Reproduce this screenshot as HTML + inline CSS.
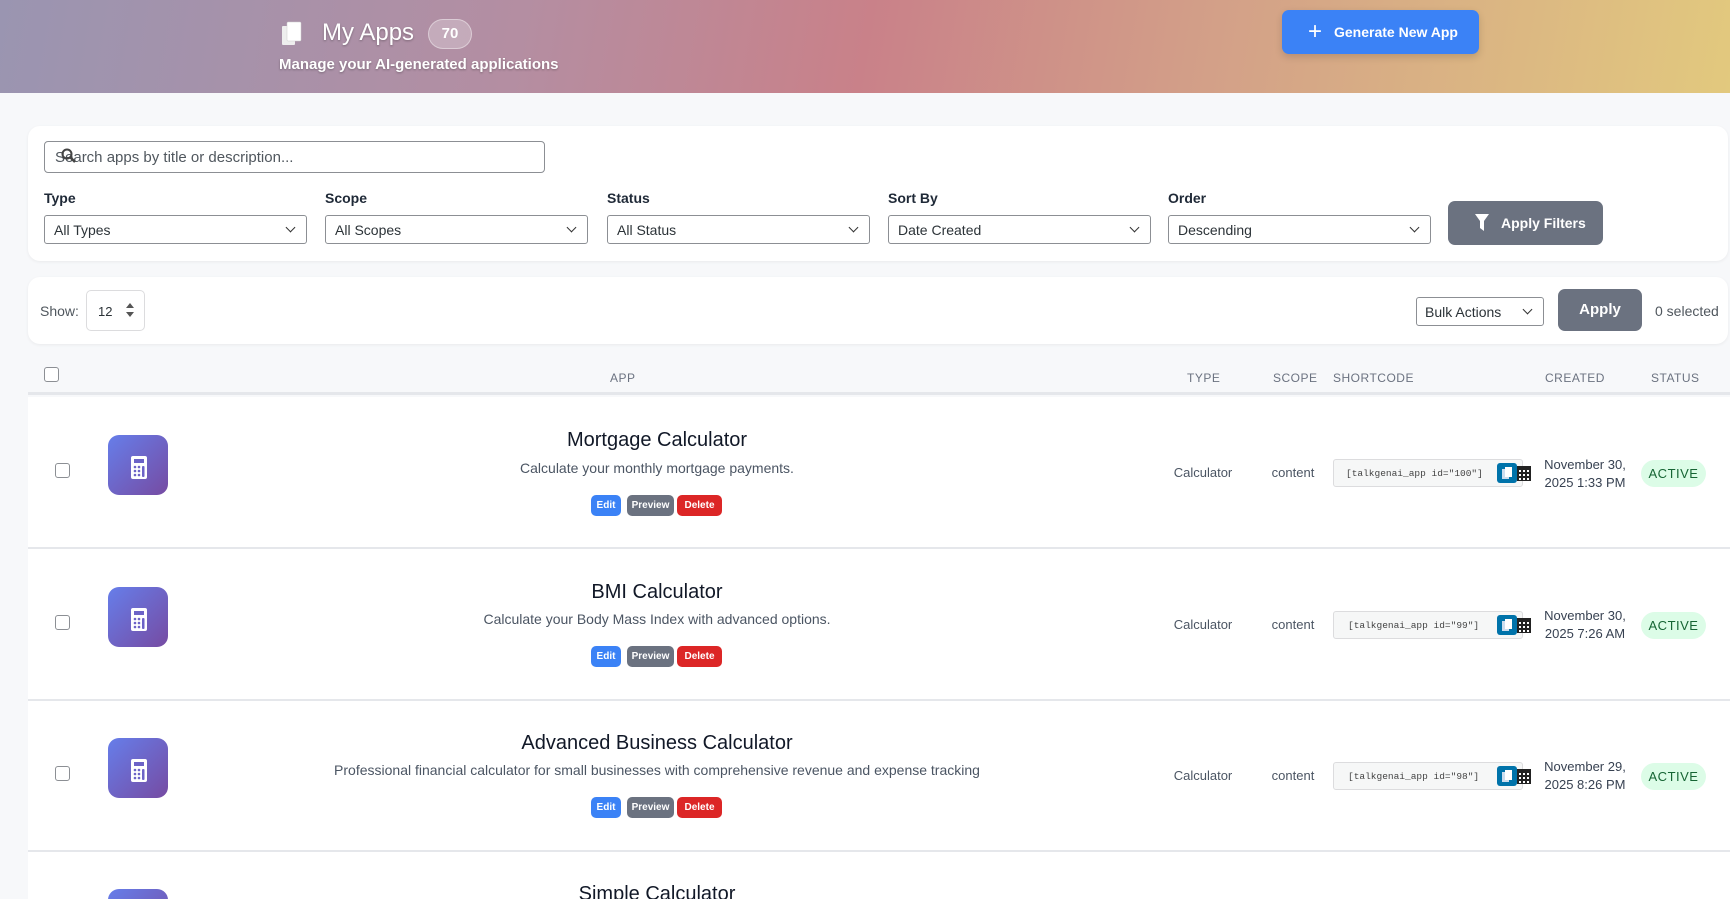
<!DOCTYPE html>
<html><head><meta charset="utf-8"><style>
*{box-sizing:border-box;margin:0;padding:0}
html,body{width:1730px;height:899px;overflow:hidden}
body{background:#f7f8fa;font-family:"Liberation Sans",sans-serif;color:#1f2937;position:relative}
.a{position:absolute}
.hdr{left:0;top:0;width:1730px;height:93px;background:linear-gradient(100deg,#9a95b1 0%,#b48ea2 30%,#c98189 50%,#d3a088 70%,#e2c97e 100%)}
.card{background:#fff;border-radius:12px;box-shadow:0 1px 3px rgba(0,0,0,.06)}
.lbl{font-size:14px;font-weight:bold;color:#1f2937}
.sel{height:29px;border:1px solid #8c8f94;border-radius:3px;background:#fff;font-size:14px;color:#2c3338;padding:6px 9px;width:263px}
.sel:after{content:"";position:absolute;right:12px;top:8px;width:6px;height:6px;border-right:1.5px solid #333;border-bottom:1.5px solid #333;transform:rotate(45deg)}
.th{font-size:12px;color:#6b7280;letter-spacing:.5px;top:371px}
.sep{left:28px;width:1702px;height:2px;background:#e5e7eb}
.cb{width:15px;height:15px;border:1.5px solid #8c8f94;border-radius:3px;background:#fff}
.ic{width:60px;height:60px;border-radius:11px;background:linear-gradient(135deg,#667eea,#764ba2)}
.t{font-size:20px;color:#111827;text-align:center;width:700px;left:307px;height:22px;overflow:hidden}
.d{font-size:14px;color:#4b5563;text-align:center;width:900px;left:207px}
.b{height:21px;border-radius:5px;color:#fff;font-size:10px;font-weight:bold;text-align:center;line-height:21px}
.c{font-size:13px;color:#4b5563;text-align:center}
.sc{width:190px;height:28px;background:#f6f7f7;border:1px solid #dcdcde;border-radius:3px;font-family:"Liberation Mono",monospace;font-size:9.5px;color:#444;padding:8px 0 0 12px}
.cp{width:20px;height:20px;background:#0073aa;border-radius:3px}
.dt{font-size:13px;color:#374151;text-align:center;width:100px;line-height:18px}
.ac{width:65px;height:27px;border-radius:14px;background:#dcfce7;color:#166534;font-size:13px;text-align:center;line-height:27px;letter-spacing:.5px}
</style></head><body>
<div class="a hdr"></div>
<svg class="a" style="left:281px;top:21px" width="22" height="26" viewBox="0 0 22 26"><rect x="1" y="5" width="13" height="19" fill="#eee" rx="1"/><rect x="6" y="1" width="14" height="19" fill="#fff" rx="1" stroke="#ccc" stroke-width=".5"/></svg>
<div class="a" style="left:322px;top:19px;font-size:24px;color:#fff;text-shadow:0 1px 2px rgba(0,0,0,.3)">My Apps</div>
<div class="a" style="left:428px;top:19px;width:44px;height:30px;border-radius:15px;background:rgba(255,255,255,.25);border:1px solid rgba(255,255,255,.4);color:#fff;font-weight:bold;font-size:15px;text-align:center;line-height:28px">70</div>
<div class="a" style="left:279px;top:56px;font-size:15px;font-weight:bold;color:#fff;text-shadow:0 1px 2px rgba(0,0,0,.3)">Manage your AI-generated applications</div>
<div class="a" style="left:1282px;top:10px;width:197px;height:44px;background:#3b82f6;border-radius:7px;box-shadow:0 3px 8px rgba(0,0,0,.15);color:#fff;font-weight:bold;font-size:14px;line-height:44px;padding-left:52px">Generate New App</div>
<div class="a" style="left:1308px;top:23px;font-size:24px;color:#fff;line-height:18px">+</div>

<div class="a card" style="left:28px;top:126px;width:1700px;height:135px"></div>
<div class="a" style="left:44px;top:141px;width:501px;height:32px;border:1px solid #8c8f94;border-radius:4px;background:#fff;font-size:15px;color:#50575e;padding:7px 10px">Search apps by title or description...</div>
<svg class="a" style="left:61px;top:148px" width="16" height="16"><circle cx="6" cy="6" r="4.5" fill="none" stroke="#444" stroke-width="2"/><path d="M9 9l5 5" stroke="#444" stroke-width="2.5"/></svg>
<div class="a lbl" style="left:44px;top:190px">Type</div>
<div class="a lbl" style="left:325px;top:190px">Scope</div>
<div class="a lbl" style="left:607px;top:190px">Status</div>
<div class="a lbl" style="left:888px;top:190px">Sort By</div>
<div class="a lbl" style="left:1168px;top:190px">Order</div>
<div class="a sel" style="left:44px;top:215px">All Types</div>
<div class="a sel" style="left:325px;top:215px">All Scopes</div>
<div class="a sel" style="left:607px;top:215px">All Status</div>
<div class="a sel" style="left:888px;top:215px">Date Created</div>
<div class="a sel" style="left:1168px;top:215px">Descending</div>
<div class="a" style="left:1448px;top:201px;width:155px;height:44px;background:#6b7280;border-radius:7px;color:#fff;font-weight:bold;font-size:14px;line-height:44px;padding-left:53px">Apply Filters</div>
<svg class="a" style="left:1475px;top:214px" width="14" height="17"><path d="M0 0h14L9 7v10L5 14V7z" fill="#fff"/></svg>

<div class="a card" style="left:28px;top:277px;width:1700px;height:67px"></div>
<div class="a" style="left:40px;top:303px;font-size:14px;color:#50575e">Show:</div>
<div class="a" style="left:86px;top:290px;width:59px;height:41px;border:1px solid #dcdcde;border-radius:5px;background:#fff;font-size:13px;color:#2c3338;padding:13px 0 0 11px">12</div>
<svg class="a" style="left:126px;top:303px" width="8" height="14"><path d="M4 0L8 5H0zM4 14L0 9h8z" fill="#555"/></svg>
<div class="a sel" style="left:1416px;top:297px;width:128px;padding-left:8px">Bulk Actions</div>
<div class="a" style="left:1558px;top:289px;width:84px;height:42px;background:#6b7280;border-radius:7px;color:#fff;font-weight:bold;font-size:15px;line-height:42px;text-align:center">Apply</div>
<div class="a" style="left:1655px;top:303px;font-size:14px;color:#50575e">0 selected</div>

<div class="a" style="left:28px;top:359px;width:1702px;height:36px;background:#f7f8fa;border-bottom:3px solid #e5e7eb"></div>
<div class="a cb" style="left:44px;top:367px"></div>
<div class="a th" style="left:610px">APP</div>
<div class="a th" style="left:1187px">TYPE</div>
<div class="a th" style="left:1273px">SCOPE</div>
<div class="a th" style="left:1333px">SHORTCODE</div>
<div class="a th" style="left:1545px">CREATED</div>
<div class="a th" style="left:1651px">STATUS</div>

<div class="a" style="left:28px;top:397px;width:1702px;height:502px;background:#fff"></div>
<div class="a sep" style="top:547px"></div>
<div class="a sep" style="top:699px"></div>
<div class="a sep" style="top:850px"></div>

<div class="a cb" style="left:55px;top:463px"></div>
<div class="a ic" style="left:108px;top:435px"></div>
<svg class="a" style="left:131px;top:456px" width="16" height="23"><rect width="16" height="23" rx="2" fill="#fff"/><rect x="3" y="3" width="10" height="4" fill="#6c63c7"/><g fill="#6c63c7"><circle cx="4" cy="11" r="1.3"/><circle cx="8" cy="11" r="1.3"/><circle cx="4" cy="15" r="1.3"/><circle cx="8" cy="15" r="1.3"/><circle cx="4" cy="19" r="1.3"/><circle cx="8" cy="19" r="1.3"/><rect x="11" y="10" width="2.5" height="11" rx="1"/></g></svg>
<div class="a t" style="top:429px">Mortgage Calculator</div>
<div class="a d" style="top:460px">Calculate your monthly mortgage payments.</div>
<div class="a b" style="left:591px;top:495px;width:30px;background:#3b82f6">Edit</div>
<div class="a b" style="left:627px;top:495px;width:47px;background:#6b7280">Preview</div>
<div class="a b" style="left:677px;top:495px;width:45px;background:#dc2626">Delete</div>
<div class="a c" style="left:1163px;top:465px;width:80px">Calculator</div>
<div class="a c" style="left:1263px;top:465px;width:60px">content</div>
<div class="a sc" style="left:1333px;top:459px">[talkgenai_app id="100"]</div>
<div class="a cp" style="left:1497px;top:463px"></div>
<svg class="a" style="left:1517px;top:463px" width="14" height="18"><rect x="0" y="3" width="14" height="15" fill="#222"/><g fill="#fff"><rect x="2" y="7" width="2" height="2"/><rect x="6" y="7" width="2" height="2"/><rect x="10" y="7" width="2" height="2"/><rect x="2" y="11" width="2" height="2"/><rect x="6" y="11" width="2" height="2"/><rect x="10" y="11" width="2" height="2"/><rect x="2" y="15" width="2" height="2"/><rect x="6" y="15" width="2" height="2"/><rect x="10" y="15" width="2" height="2"/></g></svg>
<svg class="a" style="left:1502px;top:467px" width="11" height="13"><rect x="0" y="2" width="7" height="10" fill="#cde"/><rect x="3" y="0" width="7" height="10" fill="#fff"/></svg>
<div class="a dt" style="left:1535px;top:456px">November 30,<br>2025 1:33 PM</div>
<div class="a ac" style="left:1641px;top:460px">ACTIVE</div>

<div class="a cb" style="left:55px;top:615px"></div>
<div class="a ic" style="left:108px;top:587px"></div>
<svg class="a" style="left:131px;top:608px" width="16" height="23"><rect width="16" height="23" rx="2" fill="#fff"/><rect x="3" y="3" width="10" height="4" fill="#6c63c7"/><g fill="#6c63c7"><circle cx="4" cy="11" r="1.3"/><circle cx="8" cy="11" r="1.3"/><circle cx="4" cy="15" r="1.3"/><circle cx="8" cy="15" r="1.3"/><circle cx="4" cy="19" r="1.3"/><circle cx="8" cy="19" r="1.3"/><rect x="11" y="10" width="2.5" height="11" rx="1"/></g></svg>
<div class="a t" style="top:581px">BMI Calculator</div>
<div class="a d" style="top:611px">Calculate your Body Mass Index with advanced options.</div>
<div class="a b" style="left:591px;top:646px;width:30px;background:#3b82f6">Edit</div>
<div class="a b" style="left:627px;top:646px;width:47px;background:#6b7280">Preview</div>
<div class="a b" style="left:677px;top:646px;width:45px;background:#dc2626">Delete</div>
<div class="a c" style="left:1163px;top:617px;width:80px">Calculator</div>
<div class="a c" style="left:1263px;top:617px;width:60px">content</div>
<div class="a sc" style="left:1333px;top:611px;padding-left:14px">[talkgenai_app id="99"]</div>
<div class="a cp" style="left:1497px;top:615px"></div>
<svg class="a" style="left:1517px;top:615px" width="14" height="18"><rect x="0" y="3" width="14" height="15" fill="#222"/><g fill="#fff"><rect x="2" y="7" width="2" height="2"/><rect x="6" y="7" width="2" height="2"/><rect x="10" y="7" width="2" height="2"/><rect x="2" y="11" width="2" height="2"/><rect x="6" y="11" width="2" height="2"/><rect x="10" y="11" width="2" height="2"/><rect x="2" y="15" width="2" height="2"/><rect x="6" y="15" width="2" height="2"/><rect x="10" y="15" width="2" height="2"/></g></svg>
<svg class="a" style="left:1502px;top:619px" width="11" height="13"><rect x="0" y="2" width="7" height="10" fill="#cde"/><rect x="3" y="0" width="7" height="10" fill="#fff"/></svg>
<div class="a dt" style="left:1535px;top:607px">November 30,<br>2025 7:26 AM</div>
<div class="a ac" style="left:1641px;top:612px">ACTIVE</div>

<div class="a cb" style="left:55px;top:766px"></div>
<div class="a ic" style="left:108px;top:738px"></div>
<svg class="a" style="left:131px;top:759px" width="16" height="23"><rect width="16" height="23" rx="2" fill="#fff"/><rect x="3" y="3" width="10" height="4" fill="#6c63c7"/><g fill="#6c63c7"><circle cx="4" cy="11" r="1.3"/><circle cx="8" cy="11" r="1.3"/><circle cx="4" cy="15" r="1.3"/><circle cx="8" cy="15" r="1.3"/><circle cx="4" cy="19" r="1.3"/><circle cx="8" cy="19" r="1.3"/><rect x="11" y="10" width="2.5" height="11" rx="1"/></g></svg>
<div class="a t" style="top:732px">Advanced Business Calculator</div>
<div class="a d" style="top:762px">Professional financial calculator for small businesses with comprehensive revenue and expense tracking</div>
<div class="a b" style="left:591px;top:797px;width:30px;background:#3b82f6">Edit</div>
<div class="a b" style="left:627px;top:797px;width:47px;background:#6b7280">Preview</div>
<div class="a b" style="left:677px;top:797px;width:45px;background:#dc2626">Delete</div>
<div class="a c" style="left:1163px;top:768px;width:80px">Calculator</div>
<div class="a c" style="left:1263px;top:768px;width:60px">content</div>
<div class="a sc" style="left:1333px;top:762px;padding-left:14px">[talkgenai_app id="98"]</div>
<div class="a cp" style="left:1497px;top:766px"></div>
<svg class="a" style="left:1517px;top:766px" width="14" height="18"><rect x="0" y="3" width="14" height="15" fill="#222"/><g fill="#fff"><rect x="2" y="7" width="2" height="2"/><rect x="6" y="7" width="2" height="2"/><rect x="10" y="7" width="2" height="2"/><rect x="2" y="11" width="2" height="2"/><rect x="6" y="11" width="2" height="2"/><rect x="10" y="11" width="2" height="2"/><rect x="2" y="15" width="2" height="2"/><rect x="6" y="15" width="2" height="2"/><rect x="10" y="15" width="2" height="2"/></g></svg>
<svg class="a" style="left:1502px;top:770px" width="11" height="13"><rect x="0" y="2" width="7" height="10" fill="#cde"/><rect x="3" y="0" width="7" height="10" fill="#fff"/></svg>
<div class="a dt" style="left:1535px;top:758px">November 29,<br>2025 8:26 PM</div>
<div class="a ac" style="left:1641px;top:763px">ACTIVE</div>

<div class="a ic" style="left:108px;top:889px"></div>
<div class="a t" style="top:883px">Simple Calculator</div>
</body></html>
